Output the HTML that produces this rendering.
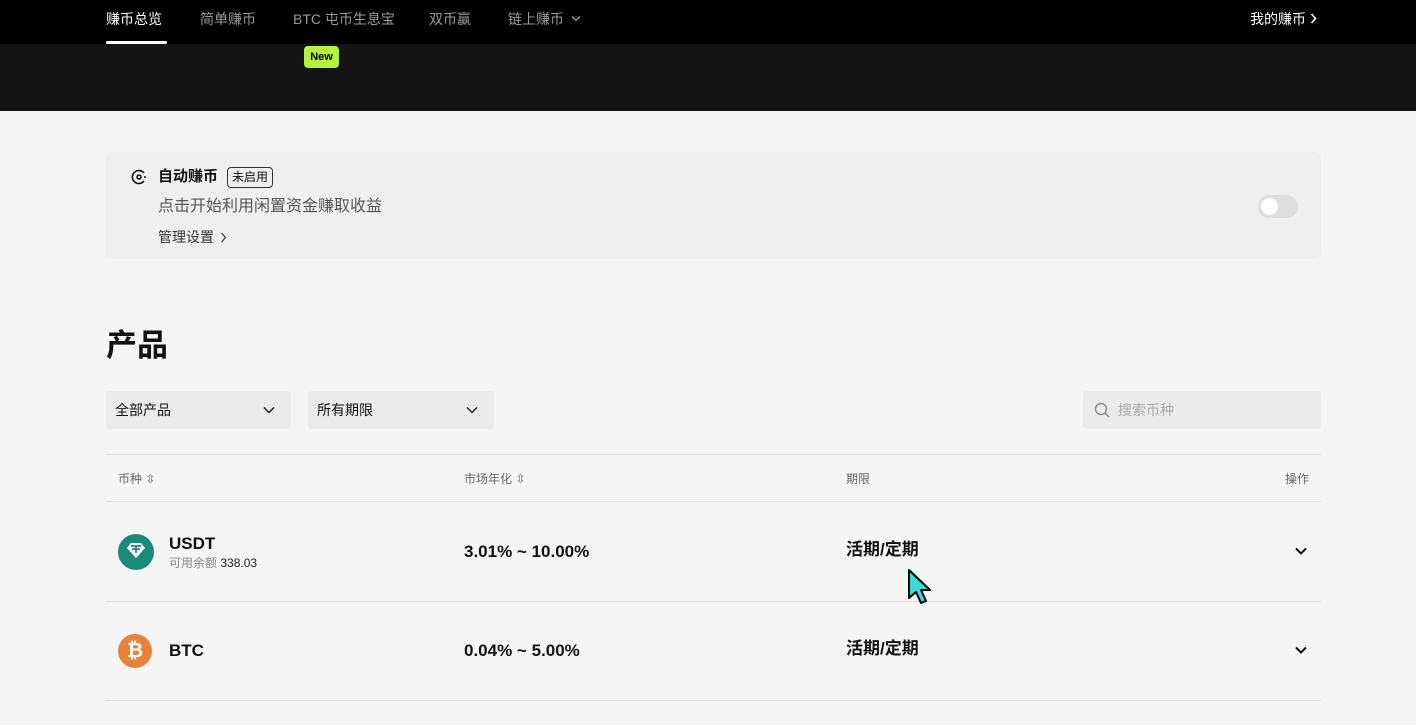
<!DOCTYPE html>
<html><head><meta charset="utf-8"><style>
*{margin:0;padding:0;box-sizing:border-box}
body{width:1416px;height:725px;overflow:hidden;background:#f5f5f5;font-family:"Liberation Sans","Noto Sans CJK SC",sans-serif;color:#111;position:relative}
.top{position:absolute;left:0;top:0;width:1416px;height:44px;background:#000}
.dark{position:absolute;left:0;top:44px;width:1416px;height:67px;background:#141414}
.nav{position:absolute;top:10px;font-size:14px;color:#9a9a9a;line-height:18px}
.a{position:absolute}
.card{position:absolute;left:106px;top:152px;width:1215px;height:107px;background:#efefef;border-radius:6px}
.sel{position:absolute;top:391px;height:38px;background:#ebebeb;border-radius:4px;font-size:14px;padding:10px 9px;line-height:18px}
.hd{position:absolute;top:470px;font-size:12px;color:#666}
.line{position:absolute;left:106px;width:1215px;height:1px;background:#e2e2e2}
.big{position:absolute;font-size:17px;font-weight:bold;line-height:20px}
.chev{position:absolute}
</style></head><body>
<div class="top"></div><div class="dark"></div>
<div class="nav" style="left:106px;color:#fff">赚币总览</div>
<div class="a" style="left:106px;top:41px;width:61px;height:3px;background:#fff;border-radius:2px"></div>
<div class="nav" style="left:200px">简单赚币</div>
<div class="nav" style="left:293px">BTC 屯币生息宝</div>
<div class="nav" style="left:429px">双币赢</div>
<div class="nav" style="left:508px">链上赚币</div>
<svg class="chev" style="left:571px;top:15px" width="10" height="7" viewBox="0 0 10 7"><path d="M1 1.5l4 4 4-4" fill="none" stroke="#9a9a9a" stroke-width="1.3"/></svg>
<div class="nav" style="left:1250px;color:#fff">我的赚币</div>
<svg class="chev" style="left:1310px;top:13px" width="7" height="11" viewBox="0 0 7 11"><path d="M1.5 1l4 4.5-4 4.5" fill="none" stroke="#fff" stroke-width="1.6"/></svg>
<div class="a" style="left:304px;top:46px;width:35px;height:22px;background:#b5f23d;border-radius:4px;font-size:11px;font-weight:bold;text-align:center;line-height:22px;color:#000">New</div>
<div class="card"></div>
<svg class="a" style="left:131px;top:169px" width="16" height="16" viewBox="0 0 16 16"><path d="M13 4A6.5 6.5 0 1 0 13 12" fill="none" stroke="#111" stroke-width="1.6"/><circle cx="8" cy="8" r="2" fill="none" stroke="#111" stroke-width="1.5"/><circle cx="14" cy="8" r="1" fill="#111"/></svg>
<div class="a" style="left:158px;top:167px;font-size:15px;font-weight:bold;line-height:20px">自动赚币</div>
<div class="a" style="left:227px;top:167px;width:46px;height:21px;border:1px solid #333;border-radius:4px;font-size:12px;text-align:center;line-height:19px">未启用</div>
<div class="a" style="left:158px;top:197px;font-size:16px;color:#555;line-height:20px">点击开始利用闲置资金赚取收益</div>
<div class="a" style="left:158px;top:228px;font-size:14px;color:#333;line-height:18px">管理设置</div>
<svg class="chev" style="left:220px;top:232px" width="7" height="11" viewBox="0 0 7 11"><path d="M1.5 1l4 4.5-4 4.5" fill="none" stroke="#333" stroke-width="1.2"/></svg>
<div class="a" style="left:1258px;top:195px;width:40px;height:23px;background:#ddd;border-radius:12px"><div style="position:absolute;left:3px;top:3px;width:17px;height:17px;border-radius:50%;background:#fff"></div></div>
<div class="a" style="left:106px;top:326px;font-size:31px;font-weight:bold;line-height:40px">产品</div>
<div class="sel" style="left:106px;width:185px">全部产品</div>
<svg class="chev" style="left:263px;top:406px" width="12" height="8" viewBox="0 0 12 8"><path d="M1 1.5l5 5 5-5" fill="none" stroke="#222" stroke-width="1.5"/></svg>
<div class="sel" style="left:308px;width:186px">所有期限</div>
<svg class="chev" style="left:466px;top:406px" width="12" height="8" viewBox="0 0 12 8"><path d="M1 1.5l5 5 5-5" fill="none" stroke="#222" stroke-width="1.5"/></svg>
<div class="sel" style="left:1083px;width:238px;color:#aaa;padding-left:35px">搜索币种
<svg style="position:absolute;left:11px;top:11px" width="16" height="16" viewBox="0 0 16 16"><circle cx="7" cy="7" r="5.5" fill="none" stroke="#888" stroke-width="1.4"/><path d="M11 11l4 4" stroke="#888" stroke-width="1.4"/></svg></div>
<div class="line" style="top:454px"></div>
<div class="hd" style="left:118px">币种 ⇳</div>
<div class="hd" style="left:464px">市场年化 ⇳</div>
<div class="hd" style="left:846px">期限</div>
<div class="hd" style="left:1285px">操作</div>
<div class="line" style="top:501px"></div>
<div class="a" style="left:118px;top:534px;width:36px;height:36px;border-radius:50%;background:#1a8a7a"></div>
<svg class="a" style="left:118px;top:534px" width="36" height="36" viewBox="0 0 36 36"><path d="M9 14l4-5h10l4 5-9 10z" fill="#fff"/><path d="M13 12h10M18 12v7M14 15h8" stroke="#1a8a7a" stroke-width="1.8"/></svg>
<div class="a" style="left:169px;top:534px;font-size:17px;font-weight:bold;line-height:20px">USDT</div>
<div class="a" style="left:169px;top:556px;font-size:12px;color:#888;line-height:15px">可用余额 <span style="color:#222">338.03</span></div>
<div class="big" style="left:464px;top:542px">3.01% ~ 10.00%</div>
<div class="big" style="left:846px;top:540px">活期/定期</div>
<svg class="chev" style="left:1295px;top:547px" width="12" height="8" viewBox="0 0 12 8"><path d="M1 1.5l5 5 5-5" fill="none" stroke="#111" stroke-width="2"/></svg>
<div class="line" style="top:601px"></div>
<div class="a" style="left:118px;top:634px;width:34px;height:34px;border-radius:50%;background:#e8823a;color:#fff;font-size:20px;font-weight:bold;text-align:center;line-height:34px">₿</div>
<div class="big" style="left:169px;top:641px">BTC</div>
<div class="big" style="left:464px;top:641px">0.04% ~ 5.00%</div>
<div class="big" style="left:846px;top:639px">活期/定期</div>
<svg class="chev" style="left:1295px;top:646px" width="12" height="8" viewBox="0 0 12 8"><path d="M1 1.5l5 5 5-5" fill="none" stroke="#111" stroke-width="2"/></svg>
<div class="line" style="top:700px"></div>
<svg class="a" style="left:906px;top:568px" width="28" height="38" viewBox="0 0 28 38"><path d="M3 2v28l7-6 5 11 5-2-5-11h9z" fill="#3fd6d6" stroke="#000" stroke-width="2" stroke-linejoin="round"/></svg>
</body></html>
